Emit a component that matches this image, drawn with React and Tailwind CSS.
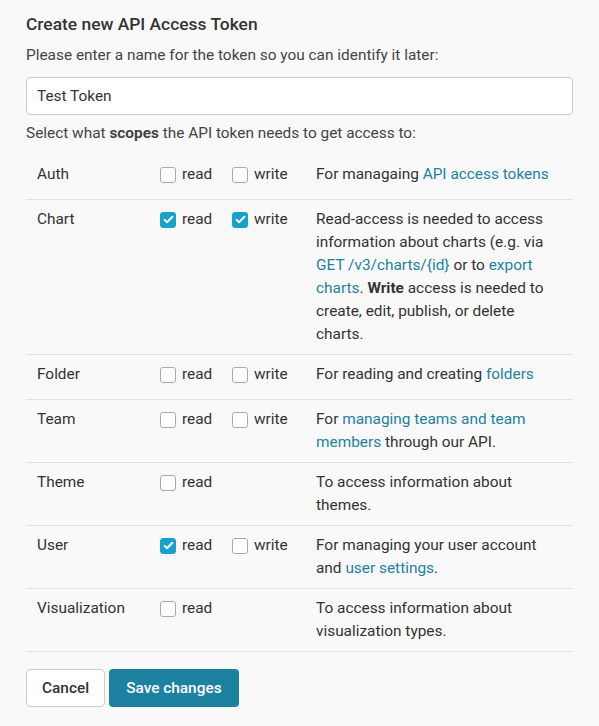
import React from 'react';

const Link = ({ children }) => <span className="text-[#1d81a2]">{children}</span>;

// Checkbox with label, styled like the reference
const Check = ({ checked, label }) => (
  <div className="flex h-[23px] items-center gap-[6px]">
    <span
      className={`flex h-[16px] w-[16px] items-center justify-center rounded-[3px] border ${
        checked ? 'border-[#18a1cd] bg-[#18a1cd]' : 'border-[#a9a9a9] bg-white'
      }`}
    >
      {checked && (
        <svg viewBox="0 0 16 16" className="h-[13px] w-[13px]">
          <path d="M3.2 8.4l3 3 6.6-6.8" fill="none" stroke="white" strokeWidth="2.4" strokeLinecap="round" strokeLinejoin="round" />
        </svg>
      )}
    </span>
    <span>{label}</span>
  </div>
);

const scopes = [
  { name: 'Auth', read: false, write: false, desc: <>For managaing <Link>API access tokens</Link></> },
  {
    name: 'Chart',
    read: true,
    write: true,
    desc: (
      <>
        Read-access is needed to access information about charts (e.g. via <Link>GET /v3/charts/{'{id}'}</Link> or to{' '}
        <Link>export charts</Link>. <b className="font-bold">Write</b> access is needed to create, edit, publish, or delete charts.
      </>
    ),
  },
  { name: 'Folder', read: false, write: false, desc: <>For reading and creating <Link>folders</Link></> },
  { name: 'Team', read: false, write: false, desc: <>For <Link>managing teams and team members</Link> through our API.</> },
  { name: 'Theme', read: false, desc: <>To access information about themes.</> },
  { name: 'User', read: true, write: false, desc: <>For managing your user account and <Link>user settings</Link>.</> },
  { name: 'Visualization', read: false, desc: <>To access information about visualization types.</> },
];

export default function App() {
  return (
    <div className="min-h-screen bg-[#f9f9f9] px-[26px] pt-[12px] font-['Roboto',sans-serif] text-[15.4px] leading-[23px] text-[#333]">
      <h2 className="text-[17.4px] font-medium leading-[24px] text-[#333]">Create new API Access Token</h2>
      <p className="mt-[8px] text-[#444]">Please enter a name for the token so you can identify it later:</p>
      <input
        className="mt-[10px] h-[38px] w-full rounded-[4px] border border-[#cccccc] bg-white px-[10px] text-[15.4px] text-[#333] outline-none"
        defaultValue="Test Token"
      />
      <p className="mt-[7px] text-[#444]">
        Select what <b className="font-bold">scopes</b> the API token needs to get access to:
      </p>

      <div className="mt-[10px]">
        {scopes.map((s) => (
          <div key={s.name} className="flex items-start border-b border-[#e2e2e2] px-[11px] pt-[8px] pb-[8px]">
            <div className="w-[123px] shrink-0">{s.name}</div>
            <div className="flex h-[28px] w-[156px] shrink-0">
              <div className="w-[72px]">
                <Check checked={s.read} label="read" />
              </div>
              {s.write !== undefined && <Check checked={s.write} label="write" />}
            </div>
            <div className="w-[246px]">{s.desc}</div>
          </div>
        ))}
      </div>

      <div className="mt-[17px] flex gap-[4px]">
        <button className="h-[38px] rounded-[4px] border border-[#cccccc] bg-white px-[15px] font-medium text-[#333]">
          Cancel
        </button>
        <button className="h-[38px] rounded-[4px] bg-[#1d81a2] px-[17px] font-medium text-white">Save changes</button>
      </div>
    </div>
  );
}
